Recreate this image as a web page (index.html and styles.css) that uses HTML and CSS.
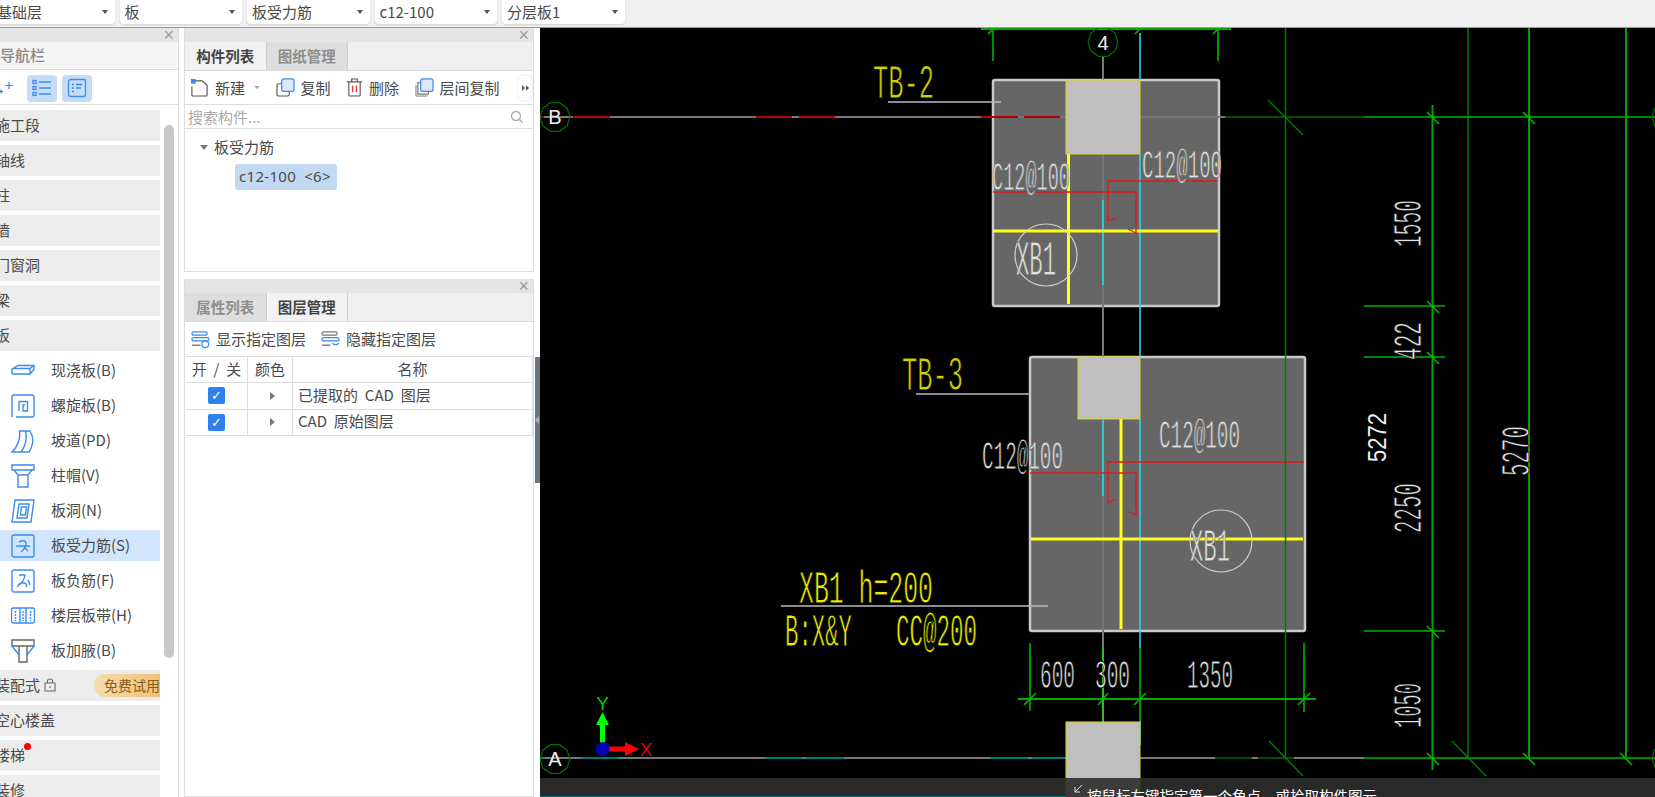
FILE: index.html
```html
<!DOCTYPE html>
<html lang="zh">
<head>
<meta charset="utf-8">
<title>板受力筋</title>
<link rel="stylesheet" href="styles.css">
</head>
<body>
<header class="topbar">
  <div class="drop first"><span>基础层</span><i class="caret"></i></div>
  <div class="drop"><span>板</span><i class="caret"></i></div>
  <div class="drop"><span>板受力筋</span><i class="caret"></i></div>
  <div class="drop"><span>c12-100</span><i class="caret"></i></div>
  <div class="drop"><span>分层板1</span><i class="caret"></i></div>
</header>
<main class="workspace">
  <aside class="nav-panel">
    <div class="band"><span class="close">×</span></div>
    <div class="nav-title">导航栏</div>
    <div class="nav-tools">
      <svg class="spark" viewBox="0 0 14 14"><path d="M9 1v7M5.500 4.500h7M1 8.500v4M-1 10.500h4" stroke="#2f80ea" stroke-width="1.200" fill="none"/></svg>
      <button class="mode"><svg viewBox="0 0 22 22"><g fill="none" stroke="#3d8bef" stroke-width="1.300"><path d="M8 5h12M8 11h12M8 17h12"/><rect x="2" y="3.500" width="3" height="3"/><rect x="2" y="9.500" width="3" height="3"/><rect x="2" y="15.500" width="3" height="3"/></g></svg></button>
      <button class="mode"><svg viewBox="0 0 22 22"><g fill="none" stroke="#3d8bef" stroke-width="1.300"><rect x="2.500" y="2.500" width="17" height="17" rx="2"/><path d="M6 7.500h2M10 7.500h6M6 11h2M10 11h5M6 14.500h2"/></g></svg></button>
    </div>
    <div class="nav-list">
      <div class="nav-row"><span>施工段</span></div>
      <div class="nav-row"><span>轴线</span></div>
      <div class="nav-row"><span>柱</span></div>
      <div class="nav-row"><span>墙</span></div>
      <div class="nav-row"><span>门窗洞</span></div>
      <div class="nav-row"><span>梁</span></div>
      <div class="nav-row"><span>板</span></div>
      <div class="sub-row"><svg class="ico" viewBox="0 0 24 24"><path d="M1 10.500q0-1 1-1h17v5.500H2q-1 0-1-1zM2 9.500l5-3h16v4l-4 4.500M19 9.500l4-3"/></svg><span>现浇板(B)</span></div>
      <div class="sub-row"><svg class="ico" viewBox="0 0 24 24"><path d="M1 23V3q0-2 2-2h18q2 0 2 2v18q0 2-2 2H5M8 17V7.500h8.500V17h-4.500v-6h2"/></svg><span>螺旋板(B)</span></div>
      <div class="sub-row"><svg class="ico" viewBox="0 0 24 24"><path d="M1 23Q10 14 8.500 2H19q6 10-1 21zM10 23q7-9 4.500-21"/></svg><span>坡道(PD)</span></div>
      <div class="sub-row"><svg class="ico" viewBox="0 0 24 24"><path d="M1 1h22v5H1zM3 6l4 5h10l4-5M7 11h10v12H7z"/></svg><span>柱帽(V)</span></div>
      <div class="sub-row"><svg class="ico" viewBox="0 0 24 24"><path d="M4 1h19l-3 22H1zM8 5h10l-2 14H6zM10.500 8h5l-1 8h-5z"/></svg><span>板洞(N)</span></div>
      <div class="sub-row on"><svg class="ico" viewBox="0 0 24 24"><rect x="1" y="1" width="22" height="22" rx="2"/><path d="M5 12h14M8 8q6-3 7 1t-5 9M13 13l4 4"/></svg><span>板受力筋(S)</span></div>
      <div class="sub-row"><svg class="ico" viewBox="0 0 24 24"><rect x="1" y="1" width="22" height="22" rx="2"/><path d="M8 6h6q-1 7-7 11q2-4 6-3t2 4M17 11l2 5"/></svg><span>板负筋(F)</span></div>
      <div class="sub-row"><svg class="ico" viewBox="0 0 24 24"><rect x="0.500" y="4" width="23" height="15" rx="2"/><path d="M9 4v15M15 4v15"/><path d="M4.500 7v10M12 7v10M19.500 7v10" stroke-dasharray="2 1"/></svg><span>楼层板带(H)</span></div>
      <div class="sub-row"><svg class="ico gray" viewBox="0 0 24 24"><path d="M1 1h22v6H1zM8 7h8v16H8z"/><path class="blue" d="M1 7l7 9M23 7l-7 9"/></svg><span>板加腋(B)</span></div>
      <div class="nav-row promo"><span>装配式</span><svg class="lock" viewBox="0 0 12 14"><path d="M1 5h10v8H1zM3.500 5V3q0-2 2.500-2t2.500 2v2M6 8v2" fill="none" stroke="#666" stroke-width="1.100"/></svg><em class="trial">免费试用</em></div>
      <div class="nav-row"><span>空心楼盖</span></div>
      <div class="nav-row stairs"><span>楼梯</span><i class="dot"></i></div>
      <div class="nav-row"><span>装修</span></div>
    </div>
    <i class="scroll"></i>
  </aside>

  <section class="mid">
    <div class="pane pane-top">
      <div class="band"><span class="close">×</span></div>
      <div class="tabs">
        <div class="tab active">构件列表</div>
        <div class="tab">图纸管理</div>
      </div>
      <div class="tools">
        <div class="tool"><svg class="tico" viewBox="0 0 20 20"><path d="M4 3h9l5 5v10q0 1-1 1H3q-1 0-1-1V9" fill="none" stroke="#555" stroke-width="1.200"/><rect x="1" y="1" width="5" height="5" fill="#3d8bef"/></svg><span>新建</span><i class="mini"></i></div>
        <div class="tool"><svg class="tico" viewBox="0 0 20 20"><rect x="1" y="6" width="13" height="13" rx="2" fill="none" stroke="#555" stroke-width="1.200"/><rect x="6" y="1" width="13" height="13" rx="2" fill="#dbe9fb" stroke="#3d8bef" stroke-width="1.300"/></svg><span>复制</span></div>
        <div class="tool"><svg class="tico del" viewBox="0 0 18 20"><path d="M1 4h16M6 4V1h6v3M3 4v14q0 1 1 1h10q1 0 1-1V4" fill="none" stroke="#555" stroke-width="1.200"/><path d="M7 8v7M11 8v7" stroke="#e0404a" stroke-width="1.500"/></svg><span>删除</span></div>
        <div class="tool"><svg class="tico" viewBox="0 0 20 20"><path d="M1 7v12h12" fill="none" stroke="#777" stroke-width="1"/><rect x="3" y="5" width="11" height="12" fill="none" stroke="#555" stroke-width="1"/><rect x="6" y="1" width="13" height="13" rx="2" fill="#dbe9fb" stroke="#3d8bef" stroke-width="1.300"/></svg><span>层间复制</span></div>
        <div class="more"><i></i><i></i></div>
      </div>
      <div class="search"><span>搜索构件...</span><svg class="lens" viewBox="0 0 14 14"><circle cx="6" cy="6" r="4.500" fill="none" stroke="#aaa" stroke-width="1.400"/><path d="M9.500 9.500l3 3" stroke="#aaa" stroke-width="1.400"/></svg></div>
      <div class="tree">
        <div class="tree-head"><i class="down"></i><span>板受力筋</span></div>
        <div class="tree-item">c12-100 &lt;6&gt;</div>
      </div>
    </div>
    <div class="pane pane-bottom">
      <div class="band"><span class="close">×</span></div>
      <div class="tabs">
        <div class="tab">属性列表</div>
        <div class="tab active">图层管理</div>
      </div>
      <div class="tools layer-tools">
        <div class="tool"><svg class="tico" viewBox="0 0 20 18"><g fill="none" stroke="#3d8bef" stroke-width="1.300"><rect x="1" y="1" width="16" height="3.500" rx="1.700"/><rect x="1" y="7" width="18" height="3.500" rx="1.700"/><path d="M1 15h9" stroke="#666"/><circle cx="15" cy="14" r="3.500"/></g></svg><span>显示指定图层</span></div>
        <div class="tool"><svg class="tico" viewBox="0 0 20 18"><g fill="none" stroke="#3d8bef" stroke-width="1.300"><rect x="1" y="1" width="16" height="3.500" rx="1.700" stroke="#777"/><rect x="1" y="7" width="18" height="3.500" rx="1.700"/><path d="M1 15h9" stroke="#666"/><path d="M12 13q3 3 7 0"/></g></svg><span>隐藏指定图层</span></div>
      </div>
      <div class="grid">
        <div class="cell head">开 / 关</div><div class="cell head">颜色</div><div class="cell head">名称</div>
        <div class="cell"><i class="check">✓</i></div><div class="cell"><i class="right"></i></div><div class="cell name">已提取的 CAD 图层</div>
        <div class="cell"><i class="check">✓</i></div><div class="cell"><i class="right"></i></div><div class="cell name">CAD 原始图层</div>
      </div>
    </div>
  </section>

  <div class="splitter"><div class="handle"><i></i></div></div>

  <section class="canvas">
    <svg class="drawing" viewBox="540 28 1115 769" width="1115" height="769">
      <defs>
        <polygon id="axis" points="15,0 12.100,8.800 4.600,14.300 -4.600,14.300 -12.100,8.800 -15,0 -12.100,-8.800 -4.600,-14.300 4.600,-14.300 12.100,-8.800" fill="none" stroke="#006f00" stroke-width="1.200"/>
      </defs>
      <rect class="plate" x="993" y="80" width="226" height="226" rx="2"/>
      <rect class="plate" x="1030" y="357" width="275" height="274" rx="2"/>

      <path class="gl" d="M1103 57V758"/>
      <path class="gl" d="M540 117H1225"/>
      <path class="rd" d="M540 117H544M573 117H610M756 117H792M799 117H835M981 117H1018M1024 117H1060"/>
      <path class="gl" d="M540 758H1364"/>
      <path class="tl" d="M540 758H545M581 758H619M765 758H802M806 758H844M990 758H1028M1032 758H1066"/>
      <path class="dg2" d="M1225 117H1364M1215 758H1252M1258 758H1294"/>
      <path class="cy" d="M1103 200V285M1103 420V496M1103 721V745M1140 33V80M1140 154V357M1140 419V648M1140 721V745"/>
      <path class="gd" d="M1103 648V721M1140 648V721"/>

      <rect class="col" x="1066" y="80" width="74" height="74"/>
      <rect class="col" x="1078" y="357" width="62" height="62"/>
      <rect class="col" x="1066" y="722" width="74" height="80"/>

      <path class="yl" d="M1068.500 154V304M993 231H1218M1121 419V629M1031 539H1303"/>
      <path class="red" d="M993 192H1136V233L1128 229M1108 192V181H1218M1108 181V221L1116 218"/>
      <path class="red" d="M1030 473H1136V515L1127 511M1108 473V462H1304M1108 462V503L1116 499"/>
      <circle class="ring" cx="1046" cy="255" r="31"/>
      <circle class="ring" cx="1221" cy="541" r="31"/>

      <path class="lead" d="M888 102H1001M916 394H1030M781 606H1048"/>

      <path class="dg" d="M1285.500 28V758M1468 28V758"/>
      <path class="md" d="M1432.500 105V770M1529 28V758M1626 28V758"/>
      <path class="bg" d="M1364 117H1655M1364 306H1445M1364 357H1445M1364 631H1445M1364 758H1655"/>
      <path class="dg" d="M1268 100L1303 135M1269 741L1303 776M1452 741L1486 776"/>
      <path class="bg" d="M1427 112L1439 124M1523 112L1535 124M1427 301L1439 313M1427 352L1439 364M1427 626L1439 638M1427 753L1439 765M1523 753L1535 765M1620 753L1632 765"/>
      <path class="gd" d="M981 29H1231M1018 699H1316"/>
      <path class="gd2" d="M993 28V61M1218 28V61M1030 643V711M1304 643V712"/>
      <path class="bg" d="M988 34L998 24M1135 34L1145 24M1213 34L1223 24M1024 705L1036 693M1098 705L1108 693M1134 705L1146 693M1298 705L1310 693"/>

      <use href="#axis" x="555" y="117"/>
      <use href="#axis" x="555" y="759"/>
      <use href="#axis" x="1103" y="42"/>
      <use href="#axis" x="1667" y="117"/>
      <use href="#axis" x="1667" y="758"/>
      <text class="label" x="555" y="124">B</text>
      <text class="label" x="555" y="766">A</text>
      <text class="label" x="1103" y="50">4</text>

      <text class="cad yt" x="873" y="98" font-size="49" textLength="61" lengthAdjust="spacingAndGlyphs">TB-2</text>
      <text class="cad yt" x="902" y="390" font-size="49" textLength="61" lengthAdjust="spacingAndGlyphs">TB-3</text>
      <text class="cad yb" x="799" y="603" font-size="47" textLength="134" lengthAdjust="spacingAndGlyphs">XB1 h=200</text>
      <text class="cad yb" x="785" y="646" font-size="47" textLength="67" lengthAdjust="spacingAndGlyphs">B:X&amp;Y</text>
      <text class="cad yb" x="896" y="646" font-size="47" textLength="81" lengthAdjust="spacingAndGlyphs">CC@200</text>
      <text class="cad wt pl" x="992" y="190" font-size="41" textLength="78" lengthAdjust="spacingAndGlyphs">C12@100</text>
      <text class="cad wt pl" x="1142" y="178" font-size="41" textLength="80" lengthAdjust="spacingAndGlyphs">C12@100</text>
      <text class="cad wt pl" x="1159" y="448" font-size="41" textLength="81" lengthAdjust="spacingAndGlyphs">C12@100</text>
      <text class="cad wt" x="982" y="469" font-size="41" textLength="46.300" lengthAdjust="spacingAndGlyphs">C12@</text>
      <text class="cad wt pl" x="1028.300" y="469" font-size="41" textLength="34.700" lengthAdjust="spacingAndGlyphs">100</text>
      <text class="cad wt pl" x="1016" y="275" font-size="50" textLength="40" lengthAdjust="spacingAndGlyphs">XB1</text>
      <text class="cad wt pl" x="1190" y="561" font-size="47" textLength="40" lengthAdjust="spacingAndGlyphs">XB1</text>
      <text class="cad wt" x="1040" y="688" font-size="40" textLength="35" lengthAdjust="spacingAndGlyphs">600</text>
      <text class="cad wt" x="1095" y="688" font-size="40" textLength="35" lengthAdjust="spacingAndGlyphs">300</text>
      <text class="cad wt" x="1187" y="688" font-size="40" textLength="46" lengthAdjust="spacingAndGlyphs">1350</text>
      <text class="cad wt" transform="translate(1421 247) rotate(-90)" font-size="40" textLength="47" lengthAdjust="spacingAndGlyphs">1550</text>
      <text class="cad wt" transform="translate(1421 360) rotate(-90)" font-size="40" textLength="38" lengthAdjust="spacingAndGlyphs">422</text>
      <text class="cad wt" transform="translate(1421 533) rotate(-90)" font-size="40" textLength="50" lengthAdjust="spacingAndGlyphs">2250</text>
      <text class="cad wt" transform="translate(1421 728) rotate(-90)" font-size="40" textLength="45" lengthAdjust="spacingAndGlyphs">1050</text>
      <text class="cad wt" transform="translate(1529 476) rotate(-90)" font-size="40" textLength="50" lengthAdjust="spacingAndGlyphs">5270</text>
      <text class="dim-bold" transform="translate(1386 462) rotate(-90)" textLength="49" lengthAdjust="spacingAndGlyphs">5272</text>

      <path d="M602.500 749V725" stroke="#00ff00" stroke-width="5"/>
      <path class="arrow-g" d="M602.500 712L609 725H596z"/>
      <path d="M605 749H625" stroke="#ff0000" stroke-width="5"/>
      <path class="arrow-r" d="M639 749L625 742V756z"/>
      <circle cx="602.500" cy="749" r="7" fill="#0000b0"/>
      <text class="ax gx" x="602.500" y="710">Y</text>
      <text class="ax rx" x="646" y="756">X</text>
    </svg>
    <div class="status">
      <svg class="st-ico" viewBox="0 0 10 10"><path d="M9 1L2 8M2 3v5h5" fill="none" stroke="#ddd" stroke-width="1"/></svg>
      <span>按鼠标左键指定第一个角点，或拾取构件图元</span>
      <i class="teal"></i>
    </div>
  </section>
</main>
</body>
</html>
```
FILE: styles.css
```css
* { box-sizing: border-box; }
html, body { margin: 0; height: 797px; overflow: hidden; }
body {
  background: #fff;
  color: #4a4a4a;
  font-family: "Noto Sans CJK SC", "Liberation Sans", sans-serif;
  font-size: 15px;
  display: flex;
  flex-direction: column;
}
i, em { font-style: normal; }

.topbar {
  height: 27px;
  flex: none;
  background: #f0f0f0;
  display: flex;
  gap: 5px;
  overflow: hidden;
}
.drop {
  width: 122.500px;
  height: 23.500px;
  background: #fff;
  border-radius: 0 0 4px 4px;
  box-shadow: 0 1px 2px rgba(0, 0, 0, .12);
  display: flex;
  align-items: center;
  justify-content: space-between;
  padding: 0 6px 0 5px;
  font-size: 15px;
  line-height: 20px;
}
.drop.first { margin-left: -8px; }
.caret {
  width: 0; height: 0;
  border: 3.500px solid transparent;
  border-top: 4px solid #555;
  border-bottom: 0;
  margin-right: 1px;
}

.workspace {
  flex: 1;
  min-height: 0;
  display: flex;
  border-top: 1px solid #9a9a9a;
}

.band {
  height: 14px;
  background: #e5e5e5;
  display: flex;
  justify-content: flex-end;
  align-items: center;
  padding-right: 4px;
}
.close { color: #999; font-family: "Liberation Sans", sans-serif; font-size: 18px; line-height: 14px; }

.nav-panel {
  width: 179px;
  flex: none;
  border-right: 1px solid #ddd;
  margin-right: 5px;
  position: relative;
  overflow: hidden;
}
.nav-title {
  height: 28px;
  background: #f5f5f5;
  border-bottom: 1px solid #ddd;
  color: #888;
  font-size: 15px;
  line-height: 25px;
  font-weight: 500;
}
.nav-tools {
  height: 35px;
  border-bottom: 1px solid #ddd;
  display: flex;
  align-items: center;
  gap: 5px;
  padding-top: 2px;
}
.spark { width: 14px; height: 14px; margin: 0 7.500px 0 0; overflow: visible; }
.mode {
  width: 30px; height: 27px;
  padding: 0;
  border: 0;
  border-radius: 4px;
  background: #c5dcf6;
  display: flex;
  align-items: center;
  justify-content: center;
}
.mode svg { width: 22px; height: 22px; }
.nav-list {
  width: 160px;
  padding-top: 5px;
  display: flex;
  flex-direction: column;
  gap: 4px;
}
.nav-row {
  height: 31px;
  flex: none;
  background: #ececec;
  display: flex;
  align-items: center;
  position: relative;
  overflow: hidden;
  line-height: 20px;
  padding-bottom: 2px;
}
.nav-row > span { margin-left: -5px; }
.sub-row {
  height: 31px;
  flex: none;
  display: flex;
  align-items: center;
  padding: 0 0 2px 11px;
  gap: 16px;
  line-height: 20px;
}
.sub-row .ico { margin-top: 2px; }
.sub-row.on { background: #d1e6fd; }
.ico { width: 24px; height: 24px; flex: none; fill: none; stroke: #3d8bef; stroke-width: 1.400; }
.ico.gray { stroke: #666; }
.ico .blue { stroke: #3d8bef; }
.lock { width: 12px; height: 14px; margin-left: 4px; }
.trial {
  position: absolute;
  left: 94px;
  top: 4px;
  width: 76px;
  height: 23px;
  padding-left: 10px;
  border-radius: 12px;
  background: linear-gradient(90deg, #f6dcae, #eebd6c);
  color: #8a5a20;
  font-size: 14px;
  line-height: 22px;
  white-space: nowrap;
}
.dot {
  position: absolute;
  left: 24px;
  top: 3px;
  width: 7px; height: 7px;
  border-radius: 50%;
  background: #f00;
}
.scroll {
  position: absolute;
  left: 164px;
  top: 97px;
  width: 10px;
  height: 533px;
  border-radius: 5px;
  background: #c8c8c8;
}

.mid {
  width: 350px;
  flex: none;
  display: flex;
  flex-direction: column;
  gap: 7px;
}
.pane { border: 1px solid #ddd; border-top: 0; }
.pane-top { height: 244px; }
.pane-bottom { flex: 1; }
.tabs {
  height: 29px;
  background: #f0f0f0;
  border-bottom: 1px solid #ddd;
  display: flex;
}
.tab {
  width: 81.500px;
  height: 28px;
  background: #dedede;
  border-right: 1px solid #d0d0d0;
  color: #8d8d8d;
  text-align: center;
  font-weight: 700;
  font-size: 14.500px;
  line-height: 27px;
}
.tab.active { background: #f2f2f2; color: #444; }
.tools {
  height: 34px;
  display: flex;
  align-items: center;
  gap: 15.500px;
  padding-left: 5px;
  border-bottom: 1px solid #ddd;
}
.layer-tools { height: 34px; padding-left: 6px; gap: 15px; border-bottom: 0; }
.tool { display: flex; align-items: center; gap: 6px; line-height: 20px; }
.tico { width: 19px; height: 19px; flex: none; }
.del { width: 17px; }
.mini {
  width: 0; height: 0;
  margin-left: 3px;
  border: 3px solid transparent;
  border-top: 3.500px solid #aaa;
  border-bottom: 0;
}
.more {
  margin-left: auto;
  margin-right: 1px;
  width: 14px;
  height: 24px;
  border-radius: 4px;
  box-shadow: 0 0 2px rgba(0, 0, 0, .2);
  display: flex;
  align-items: center;
  justify-content: center;
  gap: 1px;
}
.more i {
  width: 0; height: 0;
  border: 3px solid transparent;
  border-left: 3.500px solid #555;
  border-right: 0;
}
.search {
  height: 24px;
  border-bottom: 1px solid #ddd;
  display: flex;
  align-items: center;
  justify-content: space-between;
  padding: 0 9px 0 3px;
  color: #aaa;
  line-height: 20px;
}
.lens { width: 14px; height: 14px; }
.tree { padding: 8px 0 0 15px; }
.tree-head { display: flex; align-items: center; gap: 6px; height: 20px; line-height: 20px; }
.down {
  width: 0; height: 0;
  border: 4px solid transparent;
  border-top: 5px solid #777;
  border-bottom: 0;
}
.tree-item {
  width: 102px;
  height: 26px;
  margin: 7px 0 0 35px;
  padding-left: 4px;
  border-radius: 3px;
  background: #c3d9f2;
  line-height: 25px;
  font-family: "Noto Sans", "Liberation Sans", sans-serif;
  font-size: 15px;
  letter-spacing: .3px;
  word-spacing: 4px;
  white-space: pre;
}
.grid {
  margin-left: 1px;
  display: grid;
  grid-template-columns: 62px 45px 1fr;
  grid-auto-rows: 26.300px;
  border-top: 1px solid #ddd;
  word-spacing: 3.500px;
}
.cell {
  border-right: 1px solid #ddd;
  border-bottom: 1px solid #ddd;
  display: flex;
  align-items: center;
  justify-content: center;
  line-height: 20px;
  padding-bottom: 2px;
}
.cell.name { justify-content: flex-start; padding-left: 5px; }
.check {
  width: 17px; height: 17px;
  margin-top: 2px;
  border-radius: 2px;
  background: #2f80ea;
  color: #fff;
  font-family: "DejaVu Sans", sans-serif;
  font-size: 13px;
  font-weight: 700;
  line-height: 17px;
  text-align: center;
}
.right {
  width: 0; height: 0;
  margin: 2px 0 0 5px;
  border: 4px solid transparent;
  border-left: 5px solid #777;
  border-right: 0;
}

.splitter { width: 6px; flex: none; padding: 329px 0 0 1px; }
.handle {
  width: 5px;
  height: 126px;
  background: #6b7580;
  display: flex;
  align-items: center;
}
.handle i {
  width: 0; height: 0;
  border: 4px solid transparent;
  border-right: 4px solid #aeb4ba;
  border-left: 0;
}

.canvas { flex: 1; min-width: 0; position: relative; background: #000; overflow: hidden; }
.drawing { display: block; }
.plate { fill: #666; stroke: #c9c9c9; stroke-width: 2.500; }
.col { fill: #bfbfbf; stroke: #d8d81a; stroke-width: 1; }
.drawing path { fill: none; }
.drawing path.arrow-g { fill: #00ff00; }
.drawing path.arrow-r { fill: #ff0000; }
.gl { stroke: #777; stroke-width: 2; }
.rd { stroke: #b00000; stroke-width: 2; }
.tl { stroke: #007a7a; stroke-width: 2; }
.dg2 { stroke: #054a05; stroke-width: 2; }
.cy { stroke: #22e0f0; stroke-width: 1.500; }
.gd { stroke: #00e000; stroke-width: 1.300; }
.gd2 { stroke: #00c000; stroke-width: 1.500; }
.yl { stroke: #ffff1e; stroke-width: 3; }
.red { stroke: #e01a1a; stroke-width: 1.300; }
.ring { fill: none; stroke: #cfcfcf; stroke-width: 1.200; }
.lead { stroke: #bbb; stroke-width: 1.500; }
.dg { stroke: #007a00; stroke-width: 1.500; }
.md { stroke: #00a000; stroke-width: 2; }
.bg { stroke: #00b400; stroke-width: 1.600; }
.label {
  fill: #eee;
  font-family: "Liberation Sans", sans-serif;
  font-size: 20px;
  text-anchor: middle;
}
.cad {
  font-family: "Liberation Mono", monospace;
  font-weight: 400;
  paint-order: fill stroke;
  stroke: #000;
  stroke-width: .9px;
}
.cad.pl { stroke: #666; }
.yt { fill: #d0d000; }
.yb { fill: #ecec00; }
.wt { fill: #e0e0e0; }
.dim-bold {
  fill: #eee;
  font-family: "Liberation Sans", sans-serif;
  font-size: 25px;
}
.ax { font-family: "Liberation Sans", sans-serif; font-size: 19px; text-anchor: middle; }
.gx { fill: #00d000; }
.rx { fill: #e00000; }
.status {
  position: absolute;
  left: 0;
  right: 0;
  bottom: 0;
  height: 19px;
  background: rgba(46, 46, 46, .9);
  color: #fff;
  font-size: 14.500px;
  line-height: 20px;
  white-space: nowrap;
}
.st-ico { position: absolute; left: 533px; top: 6px; width: 10px; height: 10px; }
.status span { position: absolute; left: 547px; top: 8px; }
.teal { position: absolute; left: 0; bottom: 0; width: 526px; height: 1px; background: #0c6f70; }
```
